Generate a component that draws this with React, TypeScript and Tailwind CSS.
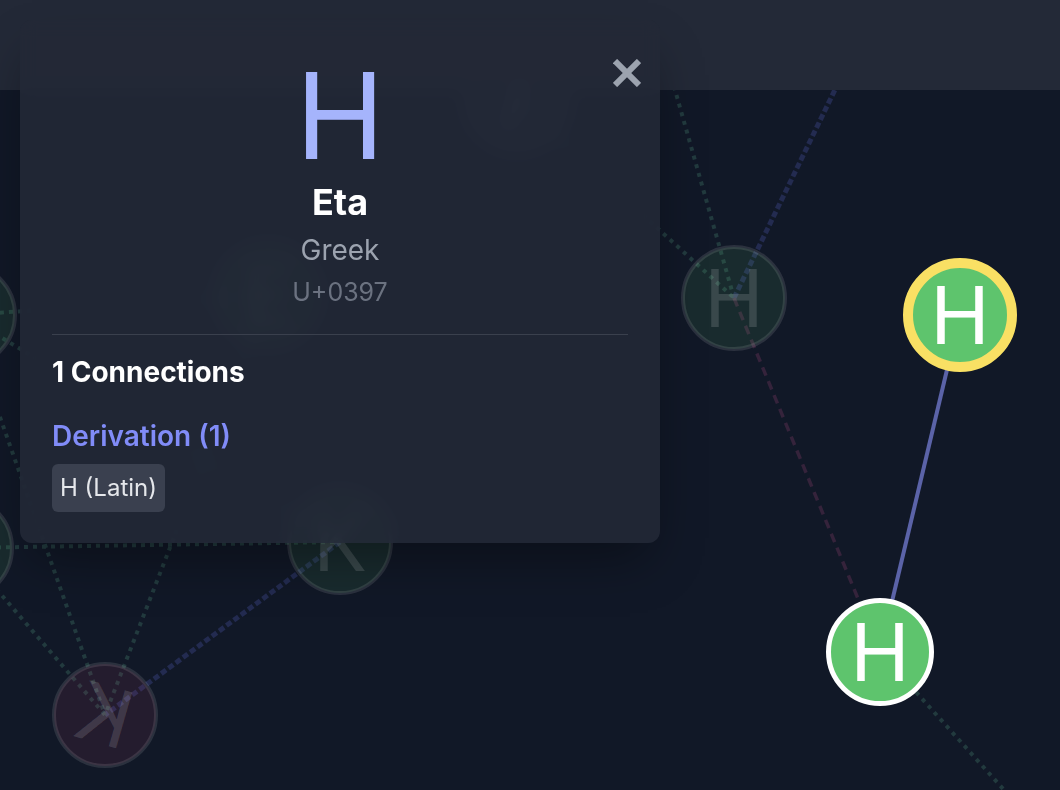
import React from "react";

type FNode = { x: number; y: number; ch: string; fill: string; rot?: number; mirror?: boolean };

const faded: FNode[] = [
  { x: -36, y: 315, ch: "H", fill: "#5ec46d" },
  { x: -39, y: 548, ch: "H", fill: "#5ec46d" },
  { x: 268, y: 295, ch: "E", fill: "#5ec46d" },
  { x: 517, y: 100, ch: "I", fill: "#8b93a7", rot: 20 },
  { x: 734, y: 298, ch: "H", fill: "#5ec46d" },
  { x: 340, y: 542, ch: "K", fill: "#5ec46d" },
  { x: 105, y: 715, ch: "K", fill: "#c0406c", rot: 16, mirror: true },
];

const TEAL = "#223a3e";
const INDIGO = "#232b50";
const PINK = "#35233b";

type Edge = { a: [number, number]; b: [number, number]; c: string; w: number; d: string };

const LX = 880;
const LY = 652;

const edges: Edge[] = [
  { a: [734, 298], b: [641, -30], c: TEAL, w: 4, d: "4 5" },
  { a: [734, 298], b: [893, -30], c: INDIGO, w: 5, d: "6 3" },
  { a: [517, 100], b: [734, 298], c: TEAL, w: 4, d: "4 5" },
  { a: [734, 298], b: [LX, LY], c: PINK, w: 3.5, d: "9 6" },
  { a: [LX, LY], b: [1040, 830], c: TEAL, w: 4, d: "4 5" },
  { a: [340, 542], b: [105, 715], c: INDIGO, w: 5, d: "6 3" },
  { a: [-36, 315], b: [105, 715], c: TEAL, w: 4, d: "4 5" },
  { a: [-39, 548], b: [105, 715], c: TEAL, w: 4, d: "4 5" },
  { a: [268, 295], b: [105, 715], c: TEAL, w: 4, d: "4 5" },
  { a: [-39, 548], b: [340, 542], c: TEAL, w: 4, d: "4 5" },
  { a: [-36, 315], b: [268, 295], c: TEAL, w: 4, d: "4 5" },
  { a: [-36, 315], b: [340, 542], c: TEAL, w: 4, d: "4 5" },
];

function Graph() {
  return (
    <svg className="absolute inset-0" width={1060} height={790} viewBox="0 0 1060 790">
      {edges.map((e, i) => (
        <line
          key={i}
          x1={e.a[0]}
          y1={e.a[1]}
          x2={e.b[0]}
          y2={e.b[1]}
          stroke={e.c}
          strokeWidth={e.w}
          strokeDasharray={e.d}
        />
      ))}
      <line x1={960} y1={315} x2={LX} y2={LY} stroke="#5b63a8" strokeWidth={4} />
      {faded.map((n, i) => (
        <g key={i}>
          <circle cx={n.x} cy={n.y} r={51} fill={n.fill} fillOpacity={0.11} stroke="#ffffff" strokeOpacity={0.11} strokeWidth={4} />
          <g transform={`translate(${n.x} ${n.y}) rotate(${n.rot ?? 0}) scale(${n.mirror ? -1 : 1} 1)`}>
            <text
              x={0}
              y={29}
              textAnchor="middle"
              fontSize={80}
              fill="#ffffff"
              fillOpacity={0.14}
              style={{ fontFamily: "Inter, sans-serif" }}
            >
              {n.ch}
            </text>
          </g>
        </g>
      ))}
      <circle cx={960} cy={315} r={52} fill="#5ec46d" stroke="#f9e064" strokeWidth={10} />
      <text x={960} y={344} textAnchor="middle" fontSize={80} fill="#ffffff" style={{ fontFamily: "Inter, sans-serif" }}>
        H
      </text>
      <circle cx={LX} cy={LY} r={51.5} fill="#5ec46d" stroke="#ffffff" strokeWidth={5} />
      <text x={LX} y={LY + 29} textAnchor="middle" fontSize={80} fill="#ffffff" style={{ fontFamily: "Inter, sans-serif" }}>
        H
      </text>
    </svg>
  );
}

export default function App() {
  return (
    <div className="relative w-[1060px] h-[790px] overflow-hidden bg-[#111827] [font-family:Inter,sans-serif]">
      <Graph />
      <div className="relative h-[90px] w-full bg-[#232937]" />
      <div className="absolute left-5 top-5 w-[640px] rounded-xl bg-[#232937]/[0.86] backdrop-blur-sm px-8 pt-[36px] pb-[31px] shadow-2xl shadow-black/40">
        <button className="absolute right-[19px] top-[39px] h-[28px] w-[28px]" aria-label="Close">
          <svg width="28" height="28" viewBox="0 0 28 28">
            <line x1="2" y1="2" x2="26" y2="26" stroke="#9ca3af" strokeWidth="6" />
            <line x1="26" y1="2" x2="2" y2="26" stroke="#9ca3af" strokeWidth="6" />
          </svg>
        </button>
        <div className="flex flex-col items-center">
          <div className="text-[120px] leading-[120px] text-[#a5b4fc]">H</div>
          <div className="mt-[6px] text-[36px] leading-[40px] font-bold text-white">Eta</div>
          <div className="mt-[10px] text-[28px] leading-[36px] text-[#9ca3af]">Greek</div>
          <div className="mt-[8px] text-[25px] leading-[32px] text-[#6b7280]">U+0397</div>
        </div>
        <div className="mt-[26px] h-px w-full bg-[#3a404d]" />
        <div className="mt-[19px] text-[28px] leading-[36px] font-bold text-white">1 Connections</div>
        <div className="mt-[28px] text-[28px] leading-[36px] font-semibold text-[#818cf8]">Derivation (1)</div>
        <div className="mt-[10px] flex">
          <span className="rounded-md bg-[#3a404f] px-2 py-[6px] text-[24px] leading-[36px] text-[#e5e7eb]">H (Latin)</span>
        </div>
      </div>
    </div>
  );
}
